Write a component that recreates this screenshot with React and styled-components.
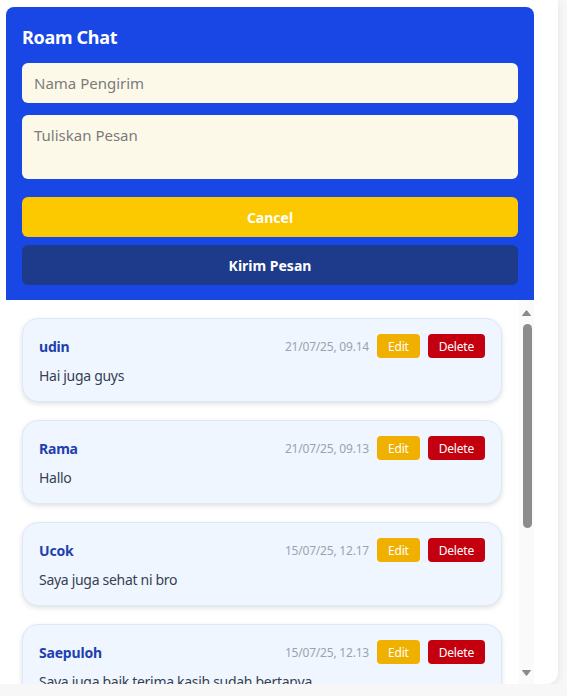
import styled, { createGlobalStyle } from "styled-components";

const GlobalStyle = createGlobalStyle`
  html, body {
    margin: 0;
    padding: 0;
    background: #f7f7f7;
    font-family: "Noto Sans", "Open Sans", sans-serif;
  }
  * { box-sizing: border-box; }
`;

const messages = [
  { id: 1, name: "udin", time: "21/07/25, 09.14", text: "Hai juga guys" },
  { id: 2, name: "Rama", time: "21/07/25, 09.13", text: "Hallo" },
  { id: 3, name: "Ucok", time: "15/07/25, 12.17", text: "Saya juga sehat ni bro" },
  {
    id: 4,
    name: "Saepuloh",
    time: "15/07/25, 12.13",
    text: "Saya juga baik terima kasih sudah bertanya",
  },
];

const Arrow = ({ down }) => (
  <svg width="9" height="6" viewBox="0 0 9 6">
    <path
      d={down ? "M0.5 0.5 H8.5 L4.5 5.5 Z" : "M0.5 5.5 H8.5 L4.5 0.5 Z"}
      fill="#8a8a8a"
      stroke="#8a8a8a"
      strokeLinejoin="round"
    />
  </svg>
);

const App = () => {
  return (
    <>
      <GlobalStyle />
      <Page>
        <ChatBox>
          <Header>
            <Title>Roam Chat</Title>
            <Input placeholder="Nama Pengirim" />
            <TextArea placeholder="Tuliskan Pesan" />
            <Button $variant="cancel">Cancel</Button>
            <Button $variant="send">Kirim Pesan</Button>
          </Header>
          <Body>
            <List>
              {messages.map((m) => (
                <Card key={m.id}>
                  <CardTop>
                    <Name>{m.name}</Name>
                    <Actions>
                      <Time>{m.time}</Time>
                      <SmallButton $variant="edit">Edit</SmallButton>
                      <SmallButton $variant="delete">Delete</SmallButton>
                    </Actions>
                  </CardTop>
                  <Text>{m.text}</Text>
                </Card>
              ))}
            </List>
            <ScrollTrack>
              <ArrowBox>
                <Arrow />
              </ArrowBox>
              <Thumb />
              <ArrowBox $down>
                <Arrow down />
              </ArrowBox>
            </ScrollTrack>
          </Body>
        </ChatBox>
      </Page>
    </>
  );
};

export default App;

const Page = styled.div`
  width: 558px;
  height: 684px;
  background: #ffffff;
  border-radius: 0 0 12px 0;
  box-shadow: 0 2px 10px rgba(0, 0, 0, 0.08);
  padding: 7px 24px 0 6px;
`;

const ChatBox = styled.div`
  display: flex;
  flex-direction: column;
  height: 100%;
`;

const Header = styled.div`
  background: #1847e5;
  border-radius: 8px 8px 0 0;
  padding: 16px 16px 15px;
  display: flex;
  flex-direction: column;
`;

const Title = styled.h2`
  margin: 0 0 12px;
  color: #ffffff;
  font-size: 18px;
  line-height: 28px;
  font-weight: 700;
  letter-spacing: -0.3px;
`;

const fieldStyle = `
  width: 100%;
  border: none;
  outline: none;
  background: #fdf9e9;
  border-radius: 6px;
  padding: 0 12px;
  font-family: inherit;
  font-size: 15px;
  color: #333;
  &::placeholder { color: #7b7b7b; }
`;

const Input = styled.input`
  ${fieldStyle}
  height: 40px;
  margin-bottom: 12px;
`;

const TextArea = styled.textarea`
  ${fieldStyle}
  height: 64px;
  padding-top: 10px;
  resize: none;
  margin-bottom: 18px;
`;

const Button = styled.button`
  height: 40px;
  border: none;
  border-radius: 6px;
  color: #ffffff;
  font-family: inherit;
  font-size: 14px;
  font-weight: 700;
  background: ${(p) => (p.$variant === "cancel" ? "#fcc800" : "#1e3a8a")};
  margin-bottom: ${(p) => (p.$variant === "cancel" ? "8px" : "0")};
`;

const Body = styled.div`
  flex: 1;
  min-height: 0;
  display: flex;
`;

const List = styled.div`
  flex: 1;
  min-width: 0;
  overflow: hidden;
  padding: 18px 17px 16px 16px;
  display: flex;
  flex-direction: column;
  gap: 18px;
`;

const ScrollTrack = styled.div`
  width: 15px;
  flex-shrink: 0;
  background: #fafafa;
  display: flex;
  flex-direction: column;
  align-items: center;
`;

const ArrowBox = styled.div`
  display: flex;
  justify-content: center;
  padding: ${(p) => (p.$down ? "0 0 8px" : "10px 0 0")};
  margin-top: ${(p) => (p.$down ? "auto" : "0")};
  height: 18px;
  align-items: ${(p) => (p.$down ? "flex-end" : "flex-start")};
`;

const Thumb = styled.div`
  width: 9px;
  height: 204px;
  margin-top: 6px;
  margin-left: 1px;
  border-radius: 5px;
  background: #8c8c8c;
`;

const Card = styled.div`
  flex-shrink: 0;
  background: #eff6ff;
  border: 1px solid #dde8f8;
  border-radius: 16px;
  padding: 15px 16px 15px;
  box-shadow: 0 2px 5px rgba(0, 0, 0, 0.12);
`;

const CardTop = styled.div`
  display: flex;
  align-items: center;
  justify-content: space-between;
  height: 24px;
`;

const Name = styled.span`
  color: #1e40af;
  font-size: 14px;
  font-weight: 700;
  letter-spacing: -0.2px;
`;

const Actions = styled.div`
  display: flex;
  align-items: center;
  gap: 8px;
`;

const Time = styled.span`
  color: #9ca3af;
  font-size: 12px;
  letter-spacing: -0.2px;
`;

const SmallButton = styled.button`
  height: 24px;
  padding: 0 11px;
  border: none;
  border-radius: 4px;
  color: #ffffff;
  font-family: inherit;
  font-size: 12px;
  letter-spacing: -0.2px;
  background: ${(p) => (p.$variant === "edit" ? "#f0b000" : "#c4000e")};
`;

const Text = styled.p`
  margin: 8px 0 0;
  color: #374151;
  font-size: 14px;
  line-height: 20px;
  letter-spacing: -0.3px;
`;
